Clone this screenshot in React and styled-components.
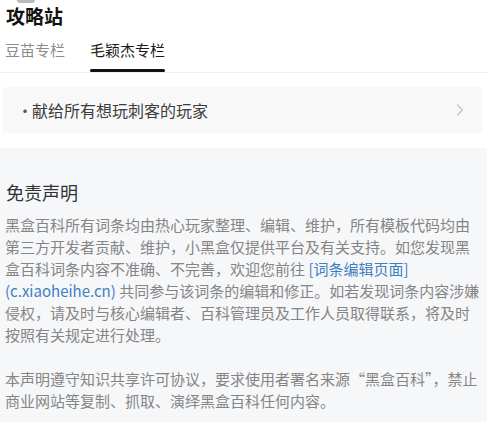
import React from "react";
import styled, { createGlobalStyle } from "styled-components";

const GlobalStyle = createGlobalStyle`
  html, body {
    margin: 0;
    padding: 0;
    background: #ffffff;
  }
  body {
    font-family: "Noto Sans CJK SC", "Noto Sans", sans-serif;
    width: 489px;
    height: 422px;
    overflow: hidden;
  }
`;

const tabs = [
  { label: "豆苗专栏", active: false },
  { label: "毛颖杰专栏", active: true },
];

function Chevron() {
  return (
    <svg width="8" height="12" viewBox="0 0 8 12" fill="none">
      <polyline
        points="1.5,1 6.5,6 1.5,11"
        stroke="#c4c4c4"
        strokeWidth="1.2"
        strokeLinecap="round"
        strokeLinejoin="round"
      />
    </svg>
  );
}

export default function App() {
  return (
    <Page>
      <GlobalStyle />
      <Header>
        <Peek />
        <Title>攻略站</Title>
        <TabBar>
          {tabs.map((t) => (
            <Tab key={t.label} $active={t.active}>
              <span>{t.label}</span>
              <Underline $active={t.active} />
            </Tab>
          ))}
        </TabBar>
      </Header>

      <CardRow>
        <Dot>·</Dot>
        <CardText>献给所有想玩刺客的玩家</CardText>
        <Chevron />
      </CardRow>

      <Disclaimer>
        <Heading>免责声明</Heading>
        <Body>
          黑盒百科所有词条均由热心玩家整理、编辑、维护，所有模板代码均由
          <br />
          第三方开发者贡献、维护，小黑盒仅提供平台及有关支持。如您发现黑
          <br />
          盒百科词条内容不准确、不完善，欢迎您前往 <Link>[词条编辑页面]</Link>
          <br />
          <Link>(c.xiaoheihe.cn)</Link> 共同参与该词条的编辑和修正。如若发现词条内容涉嫌
          <br />
          侵权，请及时与核心编辑者、百科管理员及工作人员取得联系，将及时
          <br />
          按照有关规定进行处理。
          <br />
          <br />
          本声明遵守知识共享许可协议，要求使用者署名来源“黑盒百科”，禁止
          <br />
          商业网站等复制、抓取、演绎黑盒百科任何内容。
        </Body>
      </Disclaimer>
    </Page>
  );
}

const Page = styled.div`
  display: flex;
  flex-direction: column;
  height: 422px;
`;

const Header = styled.div`
  display: flex;
  flex-direction: column;
  border-bottom: 1px solid #f0f0f0;
`;

const Peek = styled.div`
  width: 18px;
  height: 3px;
  margin-left: 17px;
  background: #b9b9b9;
  border-radius: 0 0 9px 9px;
`;

const Title = styled.div`
  padding-left: 6px;
  margin-top: 1px;
  font-size: 19px;
  line-height: 24px;
  font-weight: 700;
  color: #111;
`;

const TabBar = styled.div`
  display: flex;
  gap: 25px;
  padding-left: 5px;
  padding-top: 12px;
`;

const Tab = styled.div`
  display: flex;
  flex-direction: column;
  align-items: stretch;
  font-size: 15px;
  line-height: 20px;
  color: ${(p) => (p.$active ? "#1a1a1a" : "#8c8c8c")};
`;

const Underline = styled.div`
  height: 3px;
  margin-top: 9px;
  border-radius: 2px;
  background: ${(p) => (p.$active ? "#111" : "transparent")};
`;

const CardRow = styled.div`
  display: flex;
  align-items: center;
  height: 46px;
  margin: 14px 7px 0 3px;
  padding: 0 18px 0 14px;
  background: #f8f8f8;
  border-radius: 2px;
`;

const Dot = styled.span`
  font-size: 16px;
  color: #555;
  width: 15px;
`;

const CardText = styled.span`
  flex: 1;
  font-size: 16px;
  color: #3c3c3c;
`;

const Disclaimer = styled.div`
  flex: 1;
  margin-top: 15px;
  margin-right: 2px;
  padding: 32px 0 0 5px;
  background: #f6f7f9;
`;

const Heading = styled.div`
  font-size: 18px;
  line-height: 24px;
  font-weight: 400;
  color: #333;
  padding-left: 1px;
`;

const Body = styled.p`
  margin: 10px 0 0;
  font-size: 15px;
  line-height: 22px;
  color: #858585;
  white-space: nowrap;
`;

const Link = styled.span`
  color: #3d80c2;
`;
